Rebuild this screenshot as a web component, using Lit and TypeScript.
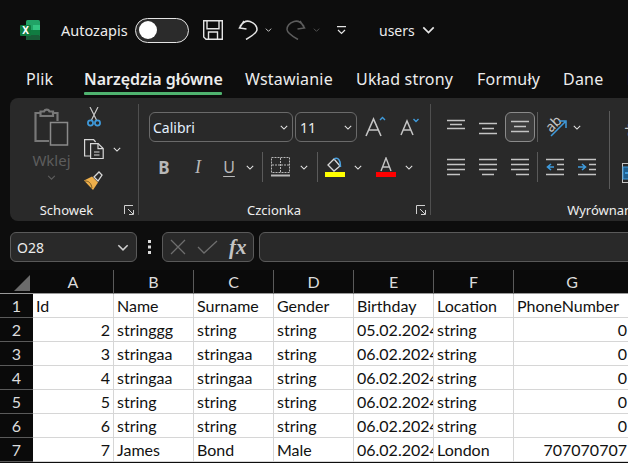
import { LitElement, html, css } from 'lit';
import { customElement } from 'lit/decorators.js';

const ico = '#c4c4c4';

const chev = (w = 9, color = '#e6e6e6') => html`<svg class="chev" width=${w} height=${Math.round(w * 0.6)} viewBox="0 0 10 6"><path d="M1 1l4 4 4-4" fill="none" stroke=${color} stroke-width="1.3"/></svg>`;

const lines = (rows: number[][], w = 18, h = 18) => html`<svg width=${w} height=${h} viewBox="0 0 ${w} ${h}">
  ${rows.map(([x1, x2, y]) => html`<svg><path d="M${x1} ${y + 0.5}H${x2}" stroke=${ico} stroke-width="1.4"/></svg>`)}
</svg>`;

const launcher = html`<svg class="launcher" width="10" height="10" viewBox="0 0 10 10"><path d="M.5 9V.5H9M4 4l5 5M5 9.5h4.5V5" fill="none" stroke="#d0d0d0" stroke-width="1"/></svg>`;

const COLS = ['A', 'B', 'C', 'D', 'E', 'F', 'G'];
const ROWS: (string | number)[][] = [
  ['Id', 'Name', 'Surname', 'Gender', 'Birthday', 'Location', 'PhoneNumber'],
  [2, 'stringgg', 'string', 'string', '05.02.2024', 'string', 0],
  [3, 'stringaa', 'stringaa', 'string', '06.02.2024', 'string', 0],
  [4, 'stringaa', 'stringaa', 'string', '06.02.2024', 'string', 0],
  [5, 'string', 'string', 'string', '06.02.2024', 'string', 0],
  [6, 'string', 'string', 'string', '06.02.2024', 'string', 0],
  [7, 'James', 'Bond', 'Male', '06.02.2024', 'London', 707070707],
];

@customElement('app-root')
export class AppRoot extends LitElement {
  static styles = css`
    :host {
      display: block;
      width: 628px;
      height: 463px;
      overflow: hidden;
      background: #0d0d0d;
      color: #ececec;
      font-family: 'Noto Sans', sans-serif;
    }
    svg { display: block; flex: none; }

    .title {
      height: 60px;
      display: flex;
      align-items: center;
      padding-left: 20px;
      font-size: 14.5px;
    }
    .autosave { margin-left: 21px; width: 74px; }
    .toggle {
      width: 54px;
      height: 25px;
      box-sizing: border-box;
      border: 1.5px solid #e4e4e4;
      border-radius: 13px;
      background: #2b2b2b;
      padding: 2.5px;
    }
    .knob { width: 18px; height: 18px; border-radius: 50%; background: #fff; }
    .save { margin-left: 14px; }
    .undo { margin-left: 15px; }
    .undo-chev { margin-left: 7px; }
    .redo { margin-left: 14px; }
    .redo-chev { margin-left: 7px; }
    .custom { margin-left: 17px; }
    .file { margin-left: 31px; width: 39px; font-size: 14px; }

    .tabs {
      height: 38px;
      display: flex;
      font-size: 16px;
      letter-spacing: 0.2px;
      white-space: nowrap;
    }
    .tab { padding-top: 7px; height: 24px; line-height: 24px; flex: none; }
    .tab.on { font-weight: 600; position: relative; letter-spacing: 0; }
    .tab.on::after {
      content: '';
      position: absolute;
      left: 0;
      right: 0;
      top: 32px;
      height: 3px;
      background: #4fb36f;
      border-radius: 1px;
    }

    .ribbon {
      margin-left: 10px;
      height: 123px;
      box-sizing: border-box;
      padding-top: 6px;
      background: #292929;
      border-radius: 8px 0 0 8px;
      display: flex;
      overflow: hidden;
    }
    .group { display: flex; flex-direction: column; flex: none; height: 117px; }
    .g-body { height: 95px; display: flex; }
    .g-label {
      height: 22px;
      display: flex;
      align-items: center;
      font-size: 13px;
      color: #efefef;
    }
    .g-label span { flex: 1; text-align: center; }
    .launcher { margin-right: 4px; }
    .sep { width: 1px; height: 111px; background: #4f4f4f; flex: none; }
    .vsep { width: 1px; height: 30px; background: #5a5a5a; flex: none; }

    .clip { width: 128px; }
    .clip .g-label span { padding-right: 1px; }
    .paste {
      margin-left: 20px;
      width: 43px;
      display: flex;
      flex-direction: column;
      align-items: center;
      padding-top: 4px;
      color: #5d5d5d;
      font-size: 15px;
    }
    .paste-text { margin-top: 1px; line-height: 22px; }
    .paste .chev { margin-top: 4px; }
    .tools {
      margin-left: 11px;
      padding-top: 3px;
      display: flex;
      flex-direction: column;
      gap: 12px;
    }
    .tool { height: 20px; display: flex; align-items: center; gap: 9px; }

    .font { width: 291px; }
    .font .g-body { flex-direction: column; padding: 8px 0 0 10px; box-sizing: border-box; gap: 10px; }
    .font .g-label span { padding-right: 7px; }
    .row { display: flex; align-items: center; height: 30px; }
    .box {
      box-sizing: border-box;
      height: 30px;
      border: 1px solid #6a6a6a;
      border-radius: 6px;
      display: flex;
      align-items: center;
      justify-content: space-between;
      padding: 0 4px 0 3px;
      font-size: 14px;
      background: #292929;
    }
    .face { width: 144px; }
    .size { width: 62px; margin-left: 2px; padding-left: 4px; }
    .slot { display: flex; justify-content: center; align-items: center; flex: none; }
    .bold, .ital, .under { color: #b8b8b8; }
    .bold { font: 700 17px 'Noto Sans', sans-serif; }
    .ital { font: italic 400 18px 'Liberation Serif', serif; }
    .under {
      font: 400 16px 'Noto Sans', sans-serif;
      text-decoration: underline;
      text-underline-offset: 3px;
    }

    .align { width: 362px; }
    .align .g-body { padding-top: 8px; box-sizing: border-box; }
    .align-main { padding-left: 9px; display: flex; flex-direction: column; gap: 10px; width: 169px; flex: none; }
    .selected {
      box-sizing: border-box;
      width: 30px;
      height: 30px;
      margin-left: 1px;
      border: 1px solid #8a8a8a;
      border-radius: 6px;
      background: #3b3b3b;
    }
    .wsep { width: 1px; height: 78px; margin-top: -1px; background: #5a5a5a; flex: none; }
    .wrap { margin-left: 12px; display: flex; flex-direction: column; gap: 21px; padding-top: 6px; }

    .formula {
      height: 30px;
      margin-top: 11px;
      display: flex;
      align-items: center;
      padding-left: 10px;
    }
    .namebox {
      box-sizing: border-box;
      width: 127px;
      height: 30px;
      border: 1px solid #5a5a5a;
      border-radius: 6px;
      background: #292929;
      display: flex;
      align-items: center;
      justify-content: space-between;
      padding: 0 7px 0 6px;
      font-size: 14px;
    }
    .dots { margin-left: 11px; }
    .fx-box {
      box-sizing: border-box;
      margin-left: 11px;
      width: 92px;
      height: 30px;
      border: 1px solid #5a5a5a;
      border-radius: 6px;
      background: #292929;
      display: flex;
      align-items: center;
      padding-left: 7px;
    }
    .fx {
      margin-left: 11px;
      font: italic 700 21px 'Liberation Serif', serif;
      color: #c4c4c4;
    }
    .input {
      box-sizing: border-box;
      margin-left: 5px;
      flex: 1;
      height: 30px;
      margin-right: -12px;
      border: 1px solid #5a5a5a;
      border-radius: 6px;
      background: #292929;
    }

    .sheet {
      margin-top: 8px;
      display: grid;
      grid-template-columns: 33px 81px repeat(5, 80px) 117px;
      grid-auto-rows: 24px;
      width: 710px;
      font: 16px Lato, sans-serif;
      background: #fff;
    }
    .corner, .ch, .rh { background: #0a0a0a; color: #dcdcdc; box-sizing: border-box; }
    .corner { border-bottom: 1px solid #9a9a9a; padding: 5px 0 0 14px; }
    .ch {
      border-bottom: 1px solid #9a9a9a;
      border-right: 1px solid #5a5a5a;
      text-align: center;
      line-height: 24px;
    }
    .rh { border-bottom: 1px solid #5a5a5a; text-align: center; line-height: 24px; }
    .cell {
      box-sizing: border-box;
      border-bottom: 1px solid #d6d6d6;
      border-right: 1px solid #d6d6d6;
      color: #111;
      line-height: 23px;
      padding: 0 3px;
      white-space: nowrap;
      overflow: hidden;
    }
    .num { text-align: right; }
  `;

  private clipboard() {
    return html`<div class="group clip">
      <div class="g-body">
        <div class="paste">
          <svg width="36" height="40" viewBox="0 0 36 40" fill="none" stroke="#777" stroke-width="2.2">
            <path d="M15 33H1.500V5h7M17 5h6.500v8"/>
            <path d="M6.500 8V3.500h3.500a3 3 0 0 1 5.500 0h3.500V8z" fill="#292929"/>
            <rect x="16.500" y="14.500" width="17" height="22.500" stroke="#8a8a8a" stroke-width="1.500"/>
          </svg>
          <div class="paste-text">Wklej</div>
          ${chev(9, '#5d5d5d')}
        </div>
        <div class="tools">
          <div class="tool">
            <svg width="20" height="20" viewBox="0 0 20 20" fill="none">
              <path d="M6 0l6.500 13M14 0L7.500 13" stroke="#c8c8c8" stroke-width="1.200"/>
              <circle cx="6.500" cy="16" r="2.600" stroke="#3f9bdc" stroke-width="1.700"/>
              <circle cx="13.500" cy="16" r="2.600" stroke="#3f9bdc" stroke-width="1.700"/>
            </svg>
          </div>
          <div class="tool">
            <svg width="20" height="20" viewBox="0 0 20 20" fill="none" stroke="#d8d8d8" stroke-width="1.200">
              <path d="M6 17H.6V.6h9l2 2.400"/>
              <path d="M6.600 4.600h7.600l5 5v10H6.600z"/>
              <path d="M14 4.600v5h5M10 13h5.500M10 16h5.500"/>
            </svg>
            ${chev(8)}
          </div>
          <div class="tool">
            <svg width="20" height="20" viewBox="0 0 20 20" fill="none">
              <path d="M0 9.500l8-4 6 6-5 7.500z" fill="#eeaf4b"/>
              <path d="M1 10c4 0 6 2 7 7" stroke="#7a5a20"/>
              <path d="M10 6l5-5 3 3-4 6z" stroke="#d8d8d8" stroke-width="1.300"/>
            </svg>
          </div>
        </div>
      </div>
      <div class="g-label"><span>Schowek</span>${launcher}</div>
    </div>`;
  }

  private font() {
    return html`<div class="group font">
      <div class="g-body">
        <div class="row">
          <div class="box face"><span style="color:#e4f1ff">Calibri</span>${chev(8)}</div>
          <div class="box size"><span>11</span>${chev(8)}</div>
          <div class="slot" style="width:36px;margin-left:1px">
            <svg width="22" height="22" viewBox="0 0 22 22" fill="none">
              <path d="M1 20L8.500 3l7.500 17M4 14h9" stroke="#c4c4c4" stroke-width="1.600"/>
              <path d="M15 4l2.500-2.500L20 4" stroke="#3f9bdc" stroke-width="1.400"/>
            </svg>
          </div>
          <div class="slot" style="width:32px">
            <svg width="20" height="20" viewBox="0 0 20 20" fill="none">
              <path d="M1 18L7 4l6 14M3.500 13h7" stroke="#c4c4c4" stroke-width="1.500"/>
              <path d="M13.500 2l2.500 2.500L18.500 2" stroke="#3f9bdc" stroke-width="1.400"/>
            </svg>
          </div>
        </div>
        <div class="row">
          <div class="slot bold" style="width:30px">B</div>
          <div class="slot ital" style="width:32px;margin-left:3px">I</div>
          <div class="slot under" style="width:26px;margin-left:2px">U</div>
          <div class="slot" style="width:10px;margin-left:3px">${chev(8)}</div>
          <div class="vsep" style="margin-left:7px"></div>
          <div style="margin-left:8px">
            <svg width="19" height="20" viewBox="0 0 19 20" fill="none" stroke="#b8b8b8">
              <path d="M.500.500h18v15H.500z" stroke-dasharray="2 1"/>
              <path d="M9.500 1v14M1 8h17" stroke-dasharray="2 1"/>
              <path d="M0 18.500h19" stroke-width="2"/>
            </svg>
          </div>
          <div class="slot" style="width:10px;margin-left:9px">${chev(8)}</div>
          <div class="vsep" style="margin-left:8px"></div>
          <div style="margin-left:7px">
            <svg width="20" height="20" viewBox="0 0 20 20" fill="none">
              <path d="M3 8l6-6 6 7-6 5z" stroke="#d8d8d8" stroke-width="1.300"/>
              <path d="M9 2c3-2 5 0 6 3l.500 5" stroke="#4a9fdc" stroke-width="1.600"/>
              <rect y="15" width="20" height="5" fill="#ffff00"/>
            </svg>
          </div>
          <div class="slot" style="width:10px;margin-left:8px">${chev(8)}</div>
          <div style="margin-left:13px">
            <svg width="20" height="20" viewBox="0 0 20 20" fill="none">
              <path d="M5 14L10 1l5 13M6.500 10h7" stroke="#c4c4c4" stroke-width="1.400"/>
              <rect y="15" width="20" height="5" fill="#ff0000"/>
            </svg>
          </div>
          <div class="slot" style="width:10px;margin-left:8px">${chev(8)}</div>
        </div>
      </div>
      <div class="g-label"><span>Czcionka</span>${launcher}</div>
    </div>`;
  }

  private align() {
    const blue = '#3f9bdc';
    return html`<div class="group align">
      <div class="g-body">
        <div class="align-main">
          <div class="row">
            <div class="slot" style="width:32px;padding-bottom:6px">${lines([[0, 18, 5], [3, 15, 9], [0, 18, 13]])}</div>
            <div class="slot" style="width:32px;padding-top:1px">${lines([[0, 18, 4], [3, 15, 9], [0, 18, 14]])}</div>
            <div class="slot selected">${lines([[0, 18, 3], [3, 15, 8], [0, 18, 13]])}</div>
            <div class="vsep" style="margin-left:2px"></div>
            <div style="margin-left:7px">
              <svg width="22" height="22" viewBox="0 0 22 22" fill="none">
                <text x="1" y="15" transform="rotate(-45 6 10)" font-family="Noto Sans, sans-serif" font-size="14" fill="#c4c4c4">ab</text>
                <path d="M6 20L20 6M14 5h7v7" stroke=${blue} stroke-width="1.500"/>
              </svg>
            </div>
            <div class="slot" style="width:10px;margin-left:5px">${chev(8)}</div>
          </div>
          <div class="row">
            <div class="slot" style="width:32px">${lines([[0, 18, 1], [0, 18, 6], [0, 18, 11], [0, 13, 16]])}</div>
            <div class="slot" style="width:32px">${lines([[0, 18, 1], [0, 18, 6], [0, 18, 11], [3, 15, 16]])}</div>
            <div class="slot" style="width:32px">${lines([[0, 18, 1], [0, 18, 6], [0, 18, 11], [5, 18, 16]])}</div>
            <div class="vsep" style="margin-left:1px"></div>
            <div style="margin-left:8px">
              <svg width="18" height="18" viewBox="0 0 18 18" fill="none">
                <path d="M0 1.500h18M11 6.500h7M11 11.500h7M0 16.500h18" stroke=${ico} stroke-width="1.400"/>
                <path d="M8 9H2M5 6L1.500 9 5 12" stroke=${blue} stroke-width="1.600"/>
              </svg>
            </div>
            <div style="margin-left:14px">
              <svg width="18" height="18" viewBox="0 0 18 18" fill="none">
                <path d="M0 1.500h18M11 6.500h7M11 11.500h7M0 16.500h18" stroke=${ico} stroke-width="1.400"/>
                <path d="M0 9h7M4 6l3.500 3L4 12" stroke=${blue} stroke-width="1.600"/>
              </svg>
            </div>
          </div>
        </div>
        <div class="wsep"></div>
        <div class="wrap">
          <svg width="18" height="24" viewBox="0 0 18 24" fill="none">
            <text x="-20" y="14" transform="rotate(-90)" font-family="Noto Sans, sans-serif" font-size="14" fill="#c4c4c4">ab</text>
          </svg>
          <svg width="18" height="20" viewBox="0 0 18 20" fill="none">
            <rect x=".5" y=".5" width="17" height="19" stroke="#c4c4c4"/>
            <rect x="1" y="4" width="16" height="12" fill="#1f5f8f" stroke=${blue}/>
            <path d="M3 10h4" stroke=${blue} stroke-width="2"/>
          </svg>
        </div>
      </div>
      <div class="g-label"><span>Wyrównanie</span>${launcher}</div>
    </div>`;
  }

  override render() {
    return html`
      <div class="title">
        <svg width="20" height="20" viewBox="0 0 20 20">
          <rect x="6" width="14" height="20" rx="1.500" fill="#21a366"/>
          <rect x="13" y="5" width="7" height="5" fill="#33c481"/>
          <rect x="6" y="10" width="14" height="5" fill="#107c41"/>
          <rect x="6" y="15" width="14" height="5" rx="1" fill="#185c37"/>
          <rect y="5" width="11" height="11" rx="1" fill="#0e7a3e"/>
          <text x="5.500" y="14" text-anchor="middle" font-family="Noto Sans, sans-serif" font-weight="700" font-size="10" fill="#fff">X</text>
        </svg>
        <div class="autosave">Autozapis</div>
        <div class="toggle"><div class="knob"></div></div>
        <svg class="save" width="20" height="20" viewBox="0 0 20 20" fill="none" stroke="#e4e4e4" stroke-width="1.400">
          <path d="M.7.700h18.600v18.600H3L.7 17z"/>
          <path d="M4 .7v8h12V.7M5.500 19.300V12h9v7.300"/>
        </svg>
        <svg class="undo" width="20" height="20" viewBox="0 0 20 20" fill="none" stroke="#e4e4e4" stroke-width="1.500">
          <path d="M6 1L1.500 8l7 1M2 6.500C5 2 9 .5 12 1.500c4 1.500 7 4 7 8 0 3-4 6-11 10"/>
        </svg>
        <span class="undo-chev">${chev(7)}</span>
        <svg class="redo" width="20" height="20" viewBox="0 0 20 20" fill="none" stroke="#5c5c5c" stroke-width="1.500">
          <path d="M14 1l4.500 7-7 1M18 6.500C15 2 11 .5 8 1.500c-4 1.500-7 4-7 8 0 3 4 6 11 10"/>
        </svg>
        <span class="redo-chev">${chev(7, '#5c5c5c')}</span>
        <svg class="custom" width="9" height="9" viewBox="0 0 9 9" fill="none" stroke="#e4e4e4" stroke-width="1.200">
          <path d="M0 .6h9M1 4l3.500 3.500L8 4"/>
        </svg>
        <div class="file" style="padding-left:2px">users</div>
        <span style="margin-left:4px">${chev(13)}</span>
      </div>

      <div class="tabs">
        <div class="tab" style="margin-left:26px;width:58px">Plik</div>
        <div class="tab on" style="width:138px">Narzędzia główne</div>
        <div class="tab" style="margin-left:23px;width:111px">Wstawianie</div>
        <div class="tab" style="width:121px">Układ strony</div>
        <div class="tab" style="width:86px">Formuły</div>
        <div class="tab" style="width:64px">Dane</div>
        <div class="tab">Recenzja</div>
      </div>

      <div class="ribbon">
        ${this.clipboard()}
        <div class="sep"></div>
        ${this.font()}
        <div class="sep"></div>
        ${this.align()}
      </div>

      <div class="formula">
        <div class="namebox"><span>O28</span>${chev(12, '#d0d0d0')}</div>
        <svg class="dots" width="3" height="14" viewBox="0 0 3 14" fill="#dcdcdc">
          <rect width="3" height="3"/><rect y="5.500" width="3" height="3"/><rect y="11" width="3" height="3"/>
        </svg>
        <div class="fx-box">
          <svg width="16" height="16" viewBox="0 0 16 16" fill="none" stroke="#6e6e6e" stroke-width="1.300"><path d="M1 1l14 14M15 1L1 15"/></svg>
          <svg style="margin-left:11px" width="21" height="14" viewBox="0 0 21 14" fill="none" stroke="#6e6e6e" stroke-width="1.300"><path d="M1 7l6 6L20 1"/></svg>
          <span class="fx">fx</span>
        </div>
        <div class="input"></div>
      </div>

      <div class="sheet">
        <div class="corner"><svg width="16" height="16" viewBox="0 0 16 16"><path d="M16 0v16H0z" fill="#6b6b6b"/></svg></div>
        ${COLS.map((c) => html`<div class="ch">${c}</div>`)}
        ${ROWS.map((row, i) => html`
          <div class="rh">${i + 1}</div>
          ${row.map((v) => html`<div class="cell ${typeof v === 'number' ? 'num' : ''}">${v}</div>`)}
        `)}
      </div>
    `;
  }
}
